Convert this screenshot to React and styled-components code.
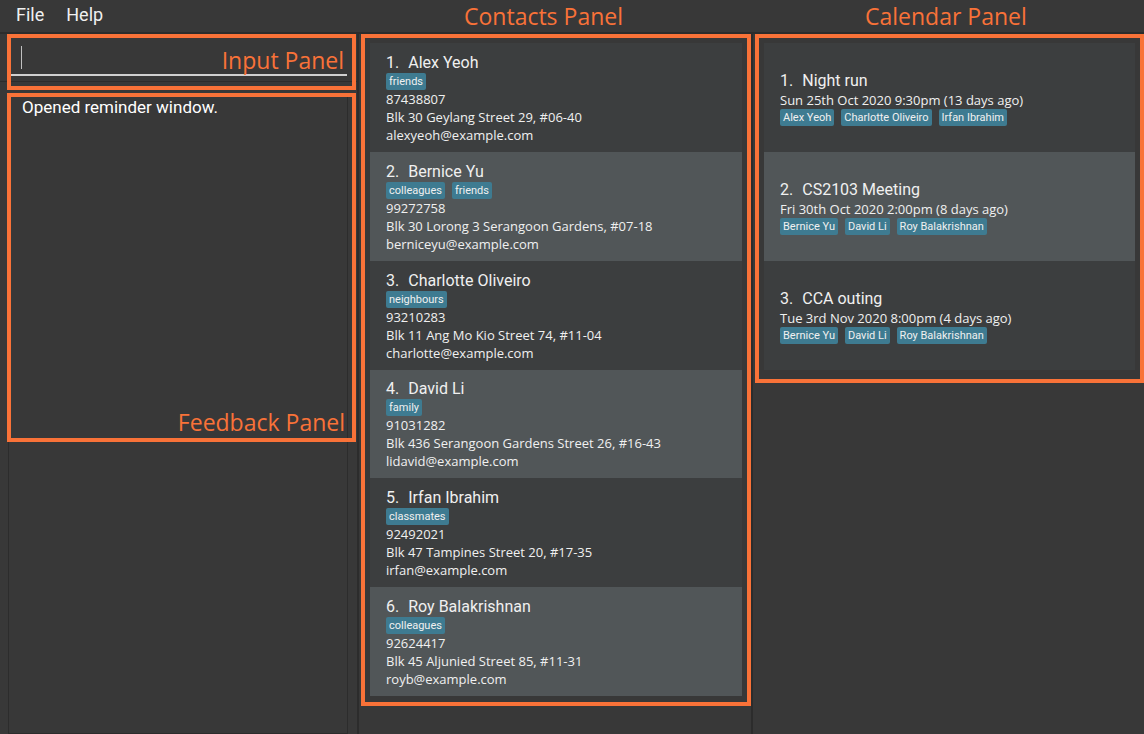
import React from "react";
import styled, { createGlobalStyle } from "styled-components";

const accent = "#f97238";
const line = "#2c2c2c";
const nameFont = `Roboto, "Liberation Sans", sans-serif`;
const textFont = `"Open Sans", "Noto Sans", sans-serif`;

const GlobalStyle = createGlobalStyle`
  *, *::before, *::after { box-sizing: border-box; }
  body {
    margin: 0;
    background: #383838;
    color: #f0f0f0;
    font-family: ${textFont};
  }
`;

const Window = styled.div`
  min-height: 100vh;
  display: flex;
  flex-direction: column;
`;

const columns = "minmax(0, 359fr) minmax(0, 394fr) minmax(0, 391fr)";

const Header = styled.header`
  display: grid;
  grid-template-columns: ${columns};
  height: 34px;
  border-bottom: 2px solid ${line};
`;

const MenuBar = styled.nav`
  display: flex;
  align-items: center;
  gap: 22px;
  padding: 0 16px 2px;
`;

const MenuButton = styled.button`
  border: 0;
  padding: 0;
  background: none;
  color: #f0f0f0;
  font: 18px/24px ${nameFont};
`;

const Caption = styled.h2`
  margin: 0;
  color: ${accent};
  font: 400 23px/32px ${textFont};
  white-space: nowrap;
`;

const HeaderCaption = styled(Caption)`
  padding-left: ${(p) => p.$indent}px;
`;

const Body = styled.main`
  flex: 1;
  display: grid;
  grid-template-columns: ${columns};
`;

const Column = styled.div`
  display: flex;
  flex-direction: column;
  padding: ${(p) => p.$pad || "0"};
  border-right: ${(p) => (p.$last ? "0" : `2px solid ${line}`)};
`;

const Frame = styled.section`
  border: 4px solid ${accent};
`;

const InputFrame = styled(Frame)`
  position: relative;
  height: 56px;
  margin: 0 1px 0 7px;
  padding-right: 5px;

  &::after {
    content: "";
    position: absolute;
    z-index: -1;
    top: 43px;
    left: -11px;
    right: -5px;
    height: 1px;
    background: ${line};
  }
`;

const CommandInput = styled.input`
  display: block;
  width: 100%;
  height: 38px;
  border: 0;
  border-bottom: 2px solid #d0d0d0;
  border-radius: 0;
  padding: 0 10px;
  background: transparent;
  color: #f0f0f0;
  caret-color: transparent;
  font: 18px ${nameFont};
  outline: none;
`;

const Caret = styled.span`
  position: absolute;
  left: 10px;
  top: 8px;
  width: 1px;
  height: 23px;
  background: #c0c0c0;
`;

const InputCaption = styled(Caption)`
  position: absolute;
  right: 8px;
  top: 6px;
`;

const Feedback = styled.div`
  position: relative;
  flex: 1;
  margin: 3px 9px 0 8px;
  border: solid ${line};
  border-width: 0 1px 1px;
`;

const FeedbackText = styled.output`
  display: block;
  padding: 3px 13px;
  color: #ffffff;
  font: 17px/22px ${nameFont};
`;

const FeedbackFrame = styled(Frame)`
  position: absolute;
  top: 0;
  left: -2px;
  right: -9px;
  height: 349px;
  display: flex;
  align-items: flex-end;
  justify-content: flex-end;
  padding-right: 7px;
`;

const ListFrame = styled(Frame)`
  padding: 5px 5px ${(p) => p.$bottom}px;
`;

const List = styled.ol`
  display: grid;
  grid-auto-rows: 1fr;
  min-height: ${(p) => p.$height}px;
  list-style: none;
  margin: 0;
  padding: 0;
`;

const Card = styled.li`
  display: flex;
  flex-direction: column;
  justify-content: center;
  padding: 2px 16px 0;
  background: #3c3e3f;

  &:nth-child(even) {
    background: #515658;
  }
`;

const Name = styled.h3`
  display: flex;
  gap: 9px;
  margin: 0;
  font: 400 16px/20px ${nameFont};
`;

const Detail = styled.p`
  margin: 0;
  font-size: 13px;
  line-height: 18px;
`;

const Tags = styled.div`
  display: flex;
  gap: 7px;
`;

const Tag = styled.span`
  padding: 0 3px;
  border-radius: 2px;
  background: #3e7b91;
  font: 11px/17px ${nameFont};
`;

const contacts = [
  ["Alex Yeoh", ["friends"], "87438807", "Blk 30 Geylang Street 29, #06-40", "alexyeoh@example.com"],
  ["Bernice Yu", ["colleagues", "friends"], "99272758", "Blk 30 Lorong 3 Serangoon Gardens, #07-18", "berniceyu@example.com"],
  ["Charlotte Oliveiro", ["neighbours"], "93210283", "Blk 11 Ang Mo Kio Street 74, #11-04", "charlotte@example.com"],
  ["David Li", ["family"], "91031282", "Blk 436 Serangoon Gardens Street 26, #16-43", "lidavid@example.com"],
  ["Irfan Ibrahim", ["classmates"], "92492021", "Blk 47 Tampines Street 20, #17-35", "irfan@example.com"],
  ["Roy Balakrishnan", ["colleagues"], "92624417", "Blk 45 Aljunied Street 85, #11-31", "royb@example.com"],
];

const events = [
  ["Night run", "Sun 25th Oct 2020 9:30pm (13 days ago)", ["Alex Yeoh", "Charlotte Oliveiro", "Irfan Ibrahim"]],
  ["CS2103 Meeting", "Fri 30th Oct 2020 2:00pm (8 days ago)", ["Bernice Yu", "David Li", "Roy Balakrishnan"]],
  ["CCA outing", "Tue 3rd Nov 2020 8:00pm (4 days ago)", ["Bernice Yu", "David Li", "Roy Balakrishnan"]],
];

function TagList({ tags }) {
  return (
    <Tags>
      {tags.map((tag) => (
        <Tag key={tag}>{tag}</Tag>
      ))}
    </Tags>
  );
}

function Title({ index, children }) {
  return (
    <Name>
      <span>{index + 1}.</span>
      <span>{children}</span>
    </Name>
  );
}

export default function App() {
  return (
    <Window>
      <GlobalStyle />
      <Header>
        <MenuBar>
          <MenuButton type="button">File</MenuButton>
          <MenuButton type="button">Help</MenuButton>
        </MenuBar>
        <HeaderCaption $indent={105}>Contacts Panel</HeaderCaption>
        <HeaderCaption $indent={112}>Calendar Panel</HeaderCaption>
      </Header>
      <Body>
        <Column>
          <InputFrame>
            <CommandInput id="command" type="text" aria-labelledby="command-label" />
            <Caret />
            <InputCaption as="label" id="command-label" htmlFor="command">
              Input Panel
            </InputCaption>
          </InputFrame>
          <Feedback>
            <FeedbackText>Opened reminder window.</FeedbackText>
            <FeedbackFrame>
              <Caption>Feedback Panel</Caption>
            </FeedbackFrame>
          </Feedback>
        </Column>
        <Column $pad="0 0 0 2px">
          <ListFrame $bottom={6}>
            <List $height={653}>
              {contacts.map(([name, tags, phone, address, email], i) => (
                <Card key={name}>
                  <Title index={i}>{name}</Title>
                  <TagList tags={tags} />
                  <Detail>{phone}</Detail>
                  <Detail>{address}</Detail>
                  <Detail>{email}</Detail>
                </Card>
              ))}
            </List>
          </ListFrame>
        </Column>
        <Column $last $pad="0 0 0 2px">
          <ListFrame $bottom={9}>
            <List $height={327}>
              {events.map(([name, date, people], i) => (
                <Card key={name}>
                  <Title index={i}>{name}</Title>
                  <Detail>{date}</Detail>
                  <TagList tags={people} />
                </Card>
              ))}
            </List>
          </ListFrame>
        </Column>
      </Body>
    </Window>
  );
}
